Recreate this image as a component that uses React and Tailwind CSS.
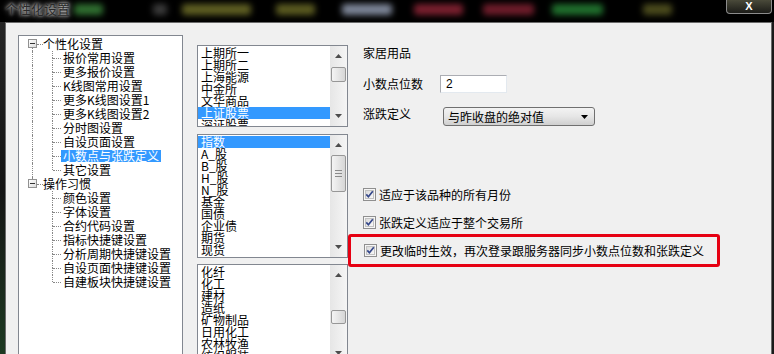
import React from "react";

const tree = [
  {
    label: "个性化设置",
    children: [
      "报价常用设置",
      "更多报价设置",
      "K线图常用设置",
      "更多K线图设置1",
      "更多K线图设置2",
      "分时图设置",
      "自设页面设置",
      "小数点与张跌定义",
      "其它设置",
    ],
  },
  {
    label: "操作习惯",
    children: [
      "颜色设置",
      "字体设置",
      "合约代码设置",
      "指标快捷键设置",
      "分析周期快捷键设置",
      "自设页面快捷键设置",
      "自建板块快捷键设置",
    ],
  },
];

const selectedNode = "小数点与张跌定义";

const blobs = [
  { ml: "ml-[74px]", w: "w-[29px]", bg: "bg-[#2f6e30]" },
  { ml: "ml-[50px]", w: "w-[14px]", bg: "bg-[#3a3a3a]" },
  { ml: "ml-[15px]", w: "w-[69px]", bg: "bg-[#5e5e22]" },
  { ml: "ml-[25px]", w: "w-[39px]", bg: "bg-[#5a5a20]" },
  { ml: "ml-[27px]", w: "w-[50px]", bg: "bg-[#7d8698]" },
  { ml: "ml-[22px]", w: "w-[49px]", bg: "bg-[#7a1f2e]" },
  { ml: "ml-[20px]", w: "w-[51px]", bg: "bg-[#6e1c2a]" },
  { ml: "ml-[18px]", w: "w-[51px]", bg: "bg-[#1f6e2c]" },
  { ml: "ml-[40px]", w: "w-[29px]", bg: "bg-[#4a4a1c]" },
];

const UpArrow = () => (
  <svg width="7" height="4" viewBox="0 0 7 4">
    <path d="M0 4h7L3.5 0z" fill="#4d4d4d" />
  </svg>
);

const DownArrow = ({ color = "#4d4d4d" }) => (
  <svg width="7" height="4" viewBox="0 0 7 4">
    <path d="M0 0h7L3.5 4z" fill={color} />
  </svg>
);

const CheckBox = () => (
  <svg width="13" height="13" viewBox="0 0 13 13">
    <defs>
      <linearGradient id="cbg" x1="0" y1="0" x2="1" y2="1">
        <stop offset="0" stopColor="#d9d9d9" />
        <stop offset="1" stopColor="#fafafa" />
      </linearGradient>
    </defs>
    <rect x="0.5" y="0.5" width="12" height="12" fill="#f6f6f6" stroke="#8f8f8f" />
    <rect x="2.5" y="2.5" width="8" height="8" fill="url(#cbg)" stroke="#c2c2c2" />
    <path d="M3.3 6.4 L5.4 8.8 L9.8 3.3" fill="none" stroke="#34478a" strokeWidth="1.7" />
  </svg>
);

const RootRow = ({ label, first }) => (
  <div className="flex h-[14px] items-center">
    <div className="w-[9px]" />
    <div className="flex h-full w-[9px] flex-col">
      <div className={`h-[2px] w-[5px] ${first ? "" : "border-r border-dotted border-[#888]"}`} />
      <div className="flex h-[9px] w-[9px] items-center justify-center border border-[#919191] bg-linear-to-br from-white to-[#dcdcdc]">
        <div className="h-px w-[5px] bg-[#333]" />
      </div>
      <div className={`h-[3px] w-[5px] ${first ? "border-r border-dotted border-[#888]" : ""}`} />
    </div>
    <div className="w-[6px] border-t border-dotted border-[#888]" />
    <span className="h-[12px] leading-[12px]">{label}</span>
  </div>
);

const ChildRow = ({ label, last, rootHasNext }) => {
  const sel = label === selectedNode;
  return (
    <div className="flex h-[14px]">
      <div className="w-[13px]" />
      <div className={`w-[1px] ${rootHasNext ? "border-l border-dotted border-[#888]" : ""}`} />
      <div className="w-[19px]" />
      <div className="flex w-[1px] flex-col">
        <div className="h-[7px] border-l border-dotted border-[#888]" />
        <div className={`flex-1 ${last ? "" : "border-l border-dotted border-[#888]"}`} />
      </div>
      <div className="mt-[7px] h-0 w-[8px] border-t border-dotted border-[#888]" />
      <span
        className={`h-[12px] self-center px-[2px] leading-[12px] ${
          sel ? "bg-[#3399ff] text-white" : ""
        }`}
      >
        {label}
      </span>
    </div>
  );
};

const ListBox = ({ items, selected, height, thumbGap, thumbH, grip }) => (
  <div className={`flex w-[151px] shrink-0 overflow-hidden border border-[#828790] bg-white ${height}`}>
    <div className="flex-1 pt-[1px]">
      {items.map((it, i) => (
        <div
          key={it}
          className={`h-[12px] pl-[3px] leading-[12px] whitespace-nowrap ${
            i === selected ? "bg-[#3399ff] text-white" : ""
          }`}
        >
          {it}
        </div>
      ))}
    </div>
    <div className="flex w-[17px] flex-col bg-linear-to-r from-[#e6e6e6] to-[#f5f5f5]">
      <div className="flex h-[20px] shrink-0 items-center justify-center">
        <UpArrow />
      </div>
      <div className={`shrink-0 ${thumbGap}`} />
      <div
        className={`mx-[1px] flex shrink-0 flex-col items-center justify-center gap-[2px] rounded-[2px] border border-[#979797] bg-linear-to-r from-[#f4f4f4] to-[#d6d6d6] ${thumbH}`}
      >
        {grip &&
          [0, 1, 2].map((k) => <div key={k} className="h-px w-[7px] bg-[#8a8a8a]" />)}
      </div>
      <div className="flex-1" />
      <div className="flex h-[20px] shrink-0 items-center justify-center">
        <DownArrow />
      </div>
    </div>
  </div>
);

export default function App() {
  return (
    <div
      className="flex h-[354px] w-[774px] flex-col overflow-hidden bg-black text-[12px] text-black"
      style={{ fontFamily: '"Noto Sans CJK SC", "Noto Sans", sans-serif' }}
    >
      {/* title bar */}
      <div className="relative h-[22px] shrink-0 bg-black">
        <div className="absolute inset-0 flex items-start pt-[4px]">
          {blobs.map((b, i) => (
            <div key={i} className={`h-[11px] rounded-[3px] blur-[3px] ${b.ml} ${b.w} ${b.bg}`} />
          ))}
        </div>
        <div className="relative pl-[5px] text-[13px] leading-[17px] text-[#2a2a2a] [text-shadow:0_0_6px_rgba(255,255,255,0.95),0_0_3px_rgba(255,255,255,0.8)]">
          个性化设置
        </div>
        <div className="absolute top-0 right-[2px] flex h-[14px] w-[46px] items-center justify-center rounded-b-[4px] border border-t-0 border-[#8c8c8c] bg-linear-to-b from-[#4a4a3a] to-[#1c1c18]">
          <span
            className="text-[11px] leading-[11px] font-bold text-white"
            style={{ fontFamily: '"Liberation Sans", sans-serif' }}
          >
            X
          </span>
        </div>
      </div>

      {/* window body */}
      <div className="flex min-h-0 flex-1 overflow-hidden">
        <div className="w-[5px] shrink-0 bg-linear-to-b from-[#262626] via-[#141414] to-[#1d3a22]" />
        <div className="flex min-w-0 flex-1 border-t border-l border-r border-[#6b6b6b] bg-[#f0f0f0]">
          {/* tree */}
          <div className="mt-[12px] ml-[12px] h-[330px] w-[165px] shrink-0 border border-[#828790] bg-white pt-[1px]">
            {tree.map((node, ri) => (
              <div key={node.label}>
                <RootRow label={node.label} first={ri === 0} />
                {node.children.map((c, ci) => (
                  <ChildRow
                    key={c}
                    label={c}
                    last={ci === node.children.length - 1}
                    rootHasNext={ri < tree.length - 1}
                  />
                ))}
              </div>
            ))}
          </div>

          {/* lists */}
          <div className="mt-[22px] ml-[14px] flex shrink-0 flex-col">
            <ListBox
              items={["上期所一", "上期所二", "上海能源", "中金所", "文华商品", "上证股票", "深证股票"]}
              selected={5}
              height="h-[82px]"
              thumbGap="h-[1px]"
              thumbH="h-[15px]"
            />
            <div className="h-[7px] shrink-0" />
            <ListBox
              items={["指数", "A_股", "B_股", "H_股", "N_股", "基金", "国债", "企业债", "期货", "现货"]}
              selected={0}
              height="h-[124px]"
              thumbGap="h-0"
              thumbH="h-[37px]"
              grip
            />
            <div className="h-[6px] shrink-0" />
            <ListBox
              items={["化纤", "化工", "建材", "造纸", "矿物制品", "日用化工", "农林牧渔", "纺织服装"]}
              selected={-1}
              height="h-[100px]"
              thumbGap="h-[25px]"
              thumbH="h-[14px]"
            />
          </div>

          {/* settings */}
          <div className="ml-[15px] flex flex-col">
            <div className="mt-[24px] h-[12px] leading-[12px]">家居用品</div>
            <div className="mt-[16px] flex h-[18px] items-center">
              <span className="w-[77px] leading-[12px]">小数点位数</span>
              <div className="flex h-[18px] w-[67px] items-center border border-[#abadb3] border-r-[#e3e9ef] border-b-[#e3e9ef] bg-white pl-[5px]">
                <span style={{ fontFamily: '"Liberation Sans", sans-serif' }}>2</span>
              </div>
            </div>
            <div className="mt-[14px] flex h-[19px] items-start">
              <span className="w-[80px] pt-[1px] leading-[12px]">涨跌定义</span>
              <div className="flex h-[19px] w-[152px] items-center justify-between rounded-[3px] border border-[#707070] bg-linear-to-b from-[#f3f3f3] via-[#e6e6e6] to-[#cfcfcf] pr-[6px] pl-[4px]">
                <span className="leading-[12px]">与昨收盘的绝对值</span>
                <DownArrow color="#000" />
              </div>
            </div>
            <div className="mt-[62px] flex h-[13px] items-center">
              <CheckBox />
              <span className="ml-[3px] leading-[12px]">适应于该品种的所有月份</span>
            </div>
            <div className="mt-[15px] flex h-[13px] items-center">
              <CheckBox />
              <span className="ml-[3px] leading-[12px]">张跌定义适应于整个交易所</span>
            </div>
            <div className="mt-[5px] -ml-[15px] flex h-[33px] w-[372px] items-center rounded-[3px] border-[3px] border-[#e60012] pl-[13px]">
              <CheckBox />
              <span className="ml-[3px] leading-[12px] whitespace-nowrap">
                更改临时生效，再次登录跟服务器同步小数点位数和张跌定义
              </span>
            </div>
          </div>
        </div>
        <div className="w-[2px] shrink-0 bg-[#1a1a1a]" />
      </div>
    </div>
  );
}
